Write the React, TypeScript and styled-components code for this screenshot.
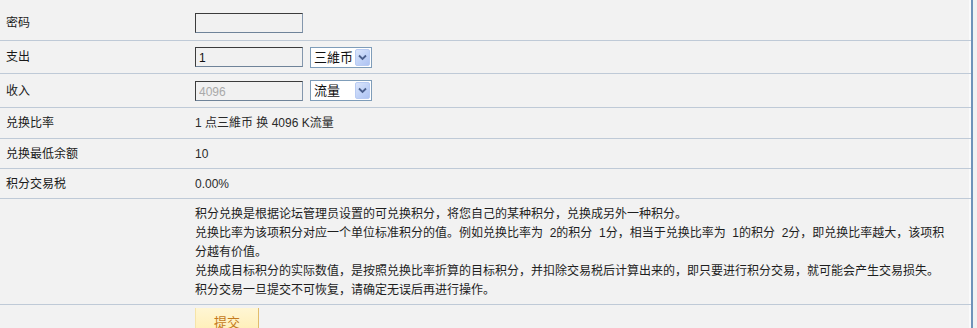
import React from 'react';
import styled, { createGlobalStyle } from 'styled-components';

const GlobalStyle = createGlobalStyle`
  html, body {
    margin: 0;
    padding: 0;
    background: #f2f2f2;
  }

  body {
    font-family: "Liberation Sans", "Noto Sans CJK SC", sans-serif;
    font-size: 12px;
    color: #222;
  }
`;

const Panel = styled.div`
  width: 971px;
  height: 328px;
  overflow: hidden;
  border-right: 2px solid #6f93b9;
  box-shadow: inset -2px 0 0 #fafafa;
`;

const Row = styled.div<{ $h?: number; $top?: number; $start?: boolean }>`
  display: grid;
  grid-template-columns: 195px 1fr;
  align-items: ${(p) => (p.$start ? 'start' : 'center')};
  height: ${(p) => (p.$h ? `${p.$h}px` : 'auto')};
  padding-top: ${(p) => p.$top || 0}px;
  box-sizing: border-box;

  & + & {
    border-top: 1px solid #bfcad7;
  }
`;

const Label = styled.div`
  padding-left: 6px;
  color: #1a1a1a;
  line-height: 18px;
`;

const Value = styled.div`
  display: flex;
  align-items: center;
  gap: 7px;
  color: #2a2a2a;
  line-height: 18px;
`;

const TextInput = styled.input<{ $muted?: boolean }>`
  width: 108px;
  height: 20px;
  box-sizing: border-box;
  margin: 0;
  padding: 2px 3px 0;
  background: #f1f1f1;
  border: 1px solid;
  border-color: #3c3c3c #8497ad #6f8399 #3c3c3c;
  font: 12px "Liberation Sans", sans-serif;
  color: ${(p) => (p.$muted ? '#a9a9a9' : '#111')};
  outline: none;
`;

const Select = styled.div`
  display: flex;
  align-items: center;
  justify-content: space-between;
  width: 62px;
  height: 21px;
  box-sizing: border-box;
  padding: 1px 1px 1px 3px;
  background: #fff;
  border: 1px solid #7f9db9;
  font-size: 13px;
  color: #111;
`;

const SelectText = styled.span`
  line-height: 17px;
`;

const ArrowBox = styled.span`
  display: flex;
  align-items: center;
  justify-content: center;
  width: 15px;
  height: 17px;
  box-sizing: border-box;
  border: 1px solid #b8cbf3;
  border-radius: 2px;
  background: linear-gradient(135deg, #dbe5fb 0%, #c0d2f7 55%, #aec3f2 100%);
`;

const Notes = styled.div`
  width: 752px;
  line-height: 19px;
  color: #1e1e1e;
  white-space: pre-wrap;
`;

const Note = styled.div``;

const SubmitButton = styled.button`
  width: 64px;
  height: 24px;
  margin: 3px 0 0;
  padding: 2px 0 0;
  border: none;
  border-left: 1px solid #f6e4a8;
  border-right: 1px solid #e2bd6c;
  background: linear-gradient(#fff6d4, #ffefb6);
  color: #c47a1c;
  font: 13px "Liberation Sans", "Noto Sans CJK SC", sans-serif;
  cursor: pointer;
`;

function Chevron() {
  return (
    <svg width="9" height="7" viewBox="0 0 9 7">
      <path d="M1 1.5 L4.5 5 L8 1.5" fill="none" stroke="#4a5f8c" strokeWidth="1.8" />
    </svg>
  );
}

function FakeSelect({ value }: { value: string }) {
  return (
    <Select>
      <SelectText>{value}</SelectText>
      <ArrowBox>
        <Chevron />
      </ArrowBox>
    </Select>
  );
}

const infoRows = [
  { label: '兑换比率', value: '1 点三維币 换 4096 K流量' },
  { label: '兑换最低余额', value: '10' },
  { label: '积分交易税', value: '0.00%' },
];

const notes = [
  '积分兑换是根据论坛管理员设置的可兑换积分，将您自己的某种积分，兑换成另外一种积分。',
  '兑换比率为该项积分对应一个单位标准积分的值。例如兑换比率为  2的积分  1分，相当于兑换比率为  1的积分  2分，即兑换比率越大，该项积分越有价值。',
  '兑换成目标积分的实际数值，是按照兑换比率折算的目标积分，并扣除交易税后计算出来的，即只要进行积分交易，就可能会产生交易损失。',
  '积分交易一旦提交不可恢复，请确定无误后再进行操作。',
];

export default function App() {
  return (
    <>
      <GlobalStyle />
      <Panel>
        <Row $h={40} $top={6}>
          <Label>密码</Label>
          <Value>
            <TextInput type="password" />
          </Value>
        </Row>
        <Row $h={33}>
          <Label>支出</Label>
          <Value>
            <TextInput defaultValue="1" />
            <FakeSelect value="三維币" />
          </Value>
        </Row>
        <Row $h={34}>
          <Label>收入</Label>
          <Value>
            <TextInput $muted defaultValue="4096" readOnly />
            <FakeSelect value="流量" />
          </Value>
        </Row>
        {infoRows.map((row, i) => (
          <Row key={row.label} $h={i === 0 ? 31 : 30}>
            <Label>{row.label}</Label>
            <Value>{row.value}</Value>
          </Row>
        ))}
        <Row $h={106} $top={6} $start>
          <Label />
          <Notes>
            {notes.map((n) => (
              <Note key={n}>{n}</Note>
            ))}
          </Notes>
        </Row>
        <Row $start>
          <Label />
          <div>
            <SubmitButton type="button">提交</SubmitButton>
          </div>
        </Row>
      </Panel>
    </>
  );
}
